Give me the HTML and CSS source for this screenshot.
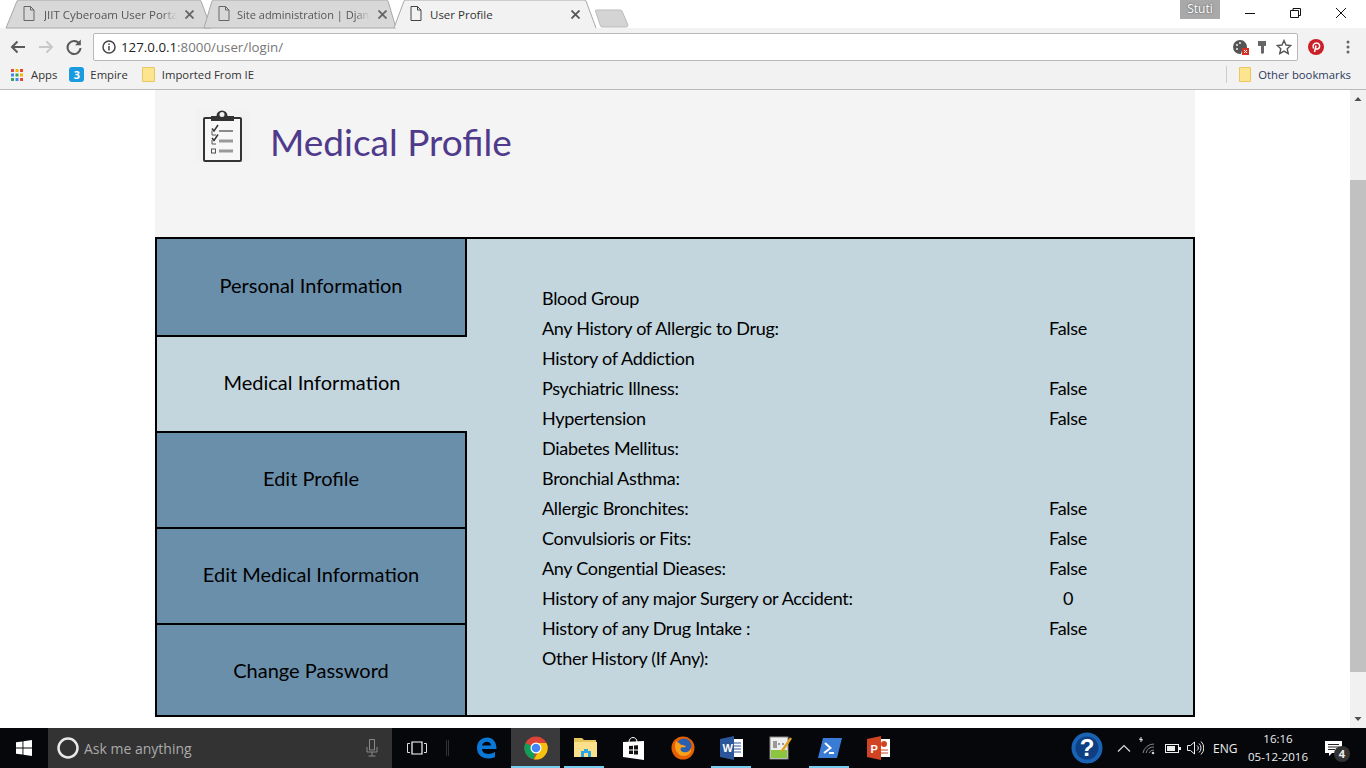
FILE: index.html
```html
<!DOCTYPE html>
<html>
<head>
<title>User Profile</title>
<link rel="stylesheet" href="styles.css">
</head>
<body>

<div class="tabstrip">
  <div class="tabs">
    <div class="tab tab-one">
      <svg class="tab-shape" width="206" height="28"><path d="M0 28 L11 1 Q11.500 0 13 0 H193 Q194.500 0 195 1 L205 28 Z" fill="#d8d8d8" stroke="#a8a8a8"/></svg>
      <svg class="page-icon" width="12" height="15" viewBox="0 0 12 15"><path d="M1 .5H7.500L11 4V14.500H1Z M7.500 .5V4H11" fill="none" stroke="#666"/></svg>
      <span class="tab-title">JIIT Cyberoam User Porta</span>
      <svg class="tab-x" width="9" height="9"><path d="M.5 .5L8.500 8.500M8.500 .5L.5 8.500" stroke="#666" stroke-width="1.800"/></svg>
    </div>
    <div class="tab tab-two">
      <svg class="tab-shape" width="192" height="28"><path d="M0 28 L8 1 Q8.500 0 10 0 H182 Q183.500 0 184 1 L192 28 Z" fill="#d8d8d8" stroke="#a8a8a8"/></svg>
      <svg class="page-icon" width="12" height="15" viewBox="0 0 12 15"><path d="M1 .5H7.500L11 4V14.500H1Z M7.500 .5V4H11" fill="none" stroke="#666"/></svg>
      <span class="tab-title">Site administration | Djan</span>
      <svg class="tab-x" width="9" height="9"><path d="M.5 .5L8.500 8.500M8.500 .5L.5 8.500" stroke="#666" stroke-width="1.800"/></svg>
    </div>
    <div class="tab tab-three">
      <svg class="tab-shape" width="202" height="29"><path d="M0 28 L10 1 Q10.500 0 12 0 H190 Q191.500 0 192 1 L202 28" fill="#f2f2f2" stroke="#a8a8a8"/></svg>
      <svg class="page-icon" width="12" height="15" viewBox="0 0 12 15"><path d="M1 .5H7.500L11 4V14.500H1Z M7.500 .5V4H11" fill="none" stroke="#444"/></svg>
      <span class="tab-title active-title">User Profile</span>
      <svg class="tab-x" width="9" height="9"><path d="M.5 .5L8.500 8.500M8.500 .5L.5 8.500" stroke="#555" stroke-width="1.800"/></svg>
    </div>
    <svg class="new-tab" width="34" height="19"><path d="M1 1 H25 Q26 1 27 2 L33 16 Q33 18 31 18 H7 Q6 18 5.500 17 L.5 2 Q.5 1 1 1Z" fill="#d4d4d4" stroke="#bbb"/></svg>
  </div>
  <div class="profile-badge">Stuti</div>
  <div class="win-controls">
    <svg width="46" height="28"><path d="M17 13.500H27" stroke="#111"/></svg>
    <svg width="46" height="28"><path d="M16.500 10.500H24.500V17.500H16.500Z M19 10V8.500H26.500V15.500H25" fill="none" stroke="#111"/></svg>
    <svg width="46" height="28"><path d="M16 8L26 18M26 8L16 18" stroke="#111" fill="none"/></svg>
  </div>
</div>

<div class="toolbar">
  <svg class="tool" width="18" height="18" viewBox="0 0 18 18"><path d="M16 9H3M8.500 3.500L3 9l5.500 5.500" fill="none" stroke="#5a5a5a" stroke-width="2"/></svg>
  <svg class="tool" width="18" height="18" viewBox="0 0 18 18"><path d="M2 9H15M9.500 3.500L15 9l-5.500 5.500" fill="none" stroke="#c8c8c8" stroke-width="2"/></svg>
  <svg class="tool" width="18" height="18" viewBox="0 0 18 18"><path d="M14.500 6A6.500 6.500 0 1 0 15.500 10" fill="none" stroke="#5a5a5a" stroke-width="2"/><path d="M15.800 1.500V7.300H10Z" fill="#5a5a5a"/></svg>
  <div class="omnibox">
    <svg width="14" height="14" viewBox="0 0 14 14"><circle cx="7" cy="7" r="6" fill="none" stroke="#444" stroke-width="1.500"/><path d="M7 6V10.500M7 3.500V5" stroke="#444" stroke-width="1.500"/></svg>
    <span class="url"><span class="url-host">127.0.0.1</span>:8000/user/login/</span>
    <div class="omni-icons">
      <svg width="18" height="18" viewBox="0 0 18 18"><path d="M8 2a7 7 0 1 0 0 14c2 0 1-2 2-3s4 0 5-3A7 7 0 0 0 8 2Z" fill="#555"/><circle cx="5" cy="7" r="1" fill="#f2f2f2"/><circle cx="8" cy="5" r="1" fill="#f2f2f2"/><circle cx="5" cy="11" r="1" fill="#f2f2f2"/><rect x="10" y="10" width="7" height="7" fill="#d93025"/><path d="M12 12l3 3m0-3l-3 3" stroke="#fff"/></svg>
      <svg width="12" height="16" viewBox="0 0 12 16"><path d="M2 2H10V7H8V14L6 15 5 14V7H2Z" fill="#666"/></svg>
      <svg class="star" width="16" height="16" viewBox="0 0 16 16"><path d="M8 1.500l2 4.500 4.800.5-3.600 3.200 1 4.800L8 12.100 3.800 14.500l1-4.800L1.200 6.500 6 6Z" fill="none" stroke="#555" stroke-width="1.400"/></svg>
    </div>
  </div>
  <svg class="pin" width="16" height="16" viewBox="0 0 16 16"><circle cx="8" cy="8" r="8" fill="#cb2027"/><path d="M5.500 9.500C4 6.500 6 4 8.500 4c2.500 0 3.500 2 3 4-.4 1.800-2.500 2.800-3.500 1.500M8 6.500L6.500 13" fill="none" stroke="#fff" stroke-width="1.500"/></svg>
  <svg class="dots" width="4" height="14" viewBox="0 0 4 14"><circle cx="2" cy="2" r="1.500" fill="#666"/><circle cx="2" cy="7" r="1.500" fill="#666"/><circle cx="2" cy="12" r="1.500" fill="#666"/></svg>
</div>

<div class="bookmarks">
  <div class="mark apps">
    <svg width="12" height="12" viewBox="0 0 12 12">
      <rect width="3" height="3" fill="#e8453c"/><rect x="4.500" width="3" height="3" fill="#f4b400"/><rect x="9" width="3" height="3" fill="#e8453c"/>
      <rect y="4.500" width="3" height="3" fill="#4285f4"/><rect x="4.500" y="4.500" width="3" height="3" fill="#34a853"/><rect x="9" y="4.500" width="3" height="3" fill="#f4b400"/>
      <rect y="9" width="3" height="3" fill="#34a853"/><rect x="4.500" y="9" width="3" height="3" fill="#4285f4"/><rect x="9" y="9" width="3" height="3" fill="#e8453c"/>
    </svg>
    <span>Apps</span>
  </div>
  <div class="mark empire">
    <span class="empire-badge">3</span>
    <span>Empire</span>
  </div>
  <div class="mark imported">
    <svg width="13" height="15" viewBox="0 0 13 15"><path d="M.5.500H12.500V14.500H.5Z" fill="#fde58f" stroke="#e9c95f"/></svg>
    <span>Imported From IE</span>
  </div>
  <div class="mark other">
    <svg width="12" height="15" viewBox="0 0 12 15"><path d="M.5.500H11.500V14.500H.5Z" fill="#fde58f" stroke="#e9c95f"/></svg>
    <span>Other bookmarks</span>
  </div>
</div>

<div class="viewport">
  <div class="page">
    <div class="page-head">
      <svg class="clipboard" width="53" height="53" viewBox="0 0 53 53">
        <rect width="53" height="53" fill="#f2f2f2"/>
        <rect x="8" y="9" width="37" height="43" rx="1" fill="#f7f7f7" stroke="#333" stroke-width="2"/>
        <path d="M15 12V7H20.500A5 5 0 0 1 31.500 7H38V12Z" fill="#333"/>
        <circle cx="26" cy="5.500" r="2.500" fill="#f2f2f2"/>
        <path d="M16 19.500l2 2.500 4-6M16 29l2 2.500 4-6" fill="none" stroke="#333" stroke-width="1.500"/>
        <path d="M16 21.500V26H20M16 31V35H20" fill="none" stroke="#555"/>
        <rect x="15.500" y="40" width="4" height="4" fill="none" stroke="#555"/>
        <path d="M23 22H37" stroke="#666" stroke-width="1.500"/>
        <path d="M23 32H37M23 42H37" stroke="#999" stroke-width="3"/>
      </svg>
      <h1 class="page-title">Medical Profile</h1>
    </div>
    <div class="profile-box">
      <div class="side-nav">
        <div class="side-item">Personal Information</div>
        <div class="side-item current">Medical Information</div>
        <div class="side-item">Edit Profile</div>
        <div class="side-item">Edit Medical Information</div>
        <div class="side-item last">Change Password</div>
      </div>
      <div class="details">
        <div class="row"><span>Blood Group</span><span class="val"></span></div>
        <div class="row"><span>Any History of Allergic to Drug:</span><span class="val">False</span></div>
        <div class="row"><span>History of Addiction</span><span class="val"></span></div>
        <div class="row"><span>Psychiatric Illness:</span><span class="val">False</span></div>
        <div class="row"><span>Hypertension</span><span class="val">False</span></div>
        <div class="row"><span>Diabetes Mellitus:</span><span class="val"></span></div>
        <div class="row"><span>Bronchial Asthma:</span><span class="val"></span></div>
        <div class="row"><span>Allergic Bronchites:</span><span class="val">False</span></div>
        <div class="row"><span>Convulsioris or Fits:</span><span class="val">False</span></div>
        <div class="row"><span>Any Congential Dieases:</span><span class="val">False</span></div>
        <div class="row"><span>History of any major Surgery or Accident:</span><span class="val">0</span></div>
        <div class="row"><span>History of any Drug Intake :</span><span class="val">False</span></div>
        <div class="row"><span>Other History (If Any):</span><span class="val"></span></div>
      </div>
    </div>
  </div>
  <div class="scrollbar">
    <svg width="16" height="17"><path d="M4.500 11L8 7l3.500 4Z" fill="#505050"/></svg>
    <div class="scroll-track"><div class="scroll-thumb"></div></div>
    <svg width="16" height="17"><path d="M4.500 6L8 10l3.500-4Z" fill="#505050"/></svg>
  </div>
</div>

<div class="taskbar">
  <div class="start">
    <svg width="16" height="16" viewBox="0 0 16 16"><path d="M0 2.300L6.500 1.400V7.600H0ZM7.400 1.200L16 0V7.600H7.400ZM0 8.400H6.500V14.600L0 13.700ZM7.400 8.400H16V16L7.400 14.800Z" fill="#fff"/></svg>
  </div>
  <div class="search">
    <svg width="22" height="22"><circle cx="11" cy="11" r="9.500" fill="none" stroke="#e8e8e8" stroke-width="2.500"/></svg>
    <span class="search-text">Ask me anything</span>
    <svg class="mic" width="12" height="18" viewBox="0 0 12 18"><path d="M3.500.5H8.500V11H3.500ZM1 8V13H11V8M6 13V17M2.500 17H9.500" fill="none" stroke="#8a8a8a"/></svg>
  </div>
  <svg class="task-view" width="20" height="14" viewBox="0 0 20 14"><path d="M5 1H15V13H5Z" fill="none" stroke="#fff" stroke-width="1.200"/><path d="M3 2.500H.5V11.500H3M17 2.500H19.500V11.500H17" fill="none" stroke="#ddd"/></svg>
  <div class="task-sep"></div>
  <div class="apps-row">
    <div class="app edge">
      <svg width="24" height="24" viewBox="0 0 24 24"><path d="M3 12C3 5 8 1.500 13 1.500c6 0 9.500 4.500 9.500 11.500H8c0 5 7 6.500 13 3v5c-8 3.500-18 1-18-9.500ZM8 9.500h9c0-5-8-5-9 0Z" fill="#0a78d7"/></svg>
    </div>
    <div class="app active">
      <svg width="24" height="24" viewBox="0 0 24 24"><circle cx="12" cy="12" r="11.500" fill="#db4437"/><path d="M12 12L1.500 7A11.500 11.500 0 0 0 10 23.300Z" fill="#0f9d58"/><path d="M12 7H22.500A11.500 11.500 0 0 1 10 23.300L16 13Z" fill="#f4c20d"/><circle cx="12" cy="12" r="5.500" fill="#fff"/><circle cx="12" cy="12" r="4.300" fill="#4285f4"/></svg>
    </div>
    <div class="app open">
      <svg width="24" height="20" viewBox="0 0 24 20"><path d="M1 0H9L11 2H23V5H1Z" fill="#e8c55a"/><rect x="1" y="4" width="23" height="15" fill="#fbdf8b"/><path d="M8 19V13H11V11H15V13H18V19Z" fill="#2aa7e0"/><rect x="11" y="15" width="4" height="4" fill="#fbdf8b"/></svg>
    </div>
    <div class="app">
      <svg width="21" height="24" viewBox="0 0 21 24"><path d="M6 6C6 0 14 0 14 6" fill="none" stroke="#fff"/><path d="M0 6L21 5V24L0 21Z" fill="#fff"/><path d="M6 10L10 9.700V13.500H6ZM11 9.600L15 9.300V13.500H11ZM6 14.500H10V18H6ZM11 14.500H15V18.500H11Z" fill="#111"/></svg>
    </div>
    <div class="app">
      <svg width="24" height="24" viewBox="0 0 24 24"><circle cx="12" cy="12" r="11.500" fill="#e66000"/><circle cx="13" cy="10" r="7.500" fill="#2a5fb0"/><path d="M5 5C2 12 6 20 13 20c5 0 8-4 7-8-1 4-5 5-8 4-3-1-3-4-1-5 2 1 4 0 4-1-2 0-3-2-5-1C9 7 7 7 5 5Z" fill="#f7a11c"/></svg>
    </div>
    <div class="app open">
      <svg width="23" height="24" viewBox="0 0 23 24"><rect x="9" y="3" width="14" height="18" fill="#fff"/><path d="M11 7H21M11 10H21M11 13H21M11 16H21" stroke="#2b579a"/><path d="M0 3L14 0V24L0 21Z" fill="#2b579a"/><text x="2.500" y="16" class="app-letter">W</text></svg>
    </div>
    <div class="app">
      <svg width="23" height="24" viewBox="0 0 23 24"><rect x="1" y="1" width="18" height="22" fill="#eee" stroke="#888"/><rect x="2" y="14" width="16" height="8" fill="#8cc63f"/><path d="M5 5V12M7 5V12M9 8H11M13 8H15" stroke="#444"/><path d="M22 2L13 15" stroke="#e0a020" stroke-width="2.500"/></svg>
    </div>
    <div class="app open">
      <svg width="24" height="20" viewBox="0 0 24 20"><path d="M5 0H24L19 20H0Z" fill="#3a7bd5"/><path d="M7 5L12.500 10 6 15M11 15H16" fill="none" stroke="#fff" stroke-width="2"/></svg>
    </div>
    <div class="app">
      <svg width="23" height="24" viewBox="0 0 23 24"><rect x="9" y="3" width="14" height="18" fill="#fff"/><circle cx="17" cy="8" r="3" fill="#d04423"/><path d="M12 14H21M12 17H21" stroke="#d04423"/><path d="M0 3L14 0V24L0 21Z" fill="#d04423"/><text x="3.500" y="16.500" class="app-letter">P</text></svg>
    </div>
  </div>
  <div class="tray">
    <svg class="help" width="32" height="32" viewBox="0 0 32 32"><circle cx="16" cy="16" r="15.500" fill="#1a62b4"/><circle cx="16" cy="16" r="11.500" fill="#0e3f82"/><text x="16" y="24" class="help-mark">?</text></svg>
    <svg class="chev" width="14" height="8"><path d="M1 7.500L7 1.500l6 6" fill="none" stroke="#ddd" stroke-width="1.200"/></svg>
    <svg class="wifi" width="16" height="18" viewBox="0 0 16 18"><path d="M0 2L4 3M2 0L2 5" stroke="#eee"/><path d="M4 16A11 11 0 0 1 15 7M7 16A8 8 0 0 1 15 10M10 16A5 5 0 0 1 15 13" fill="none" stroke="#888"/><circle cx="14" cy="16" r="1.300" fill="#ccc"/></svg>
    <svg class="batt" width="16" height="9" viewBox="0 0 16 9"><rect x=".5" y=".5" width="13" height="8" fill="none" stroke="#eee"/><rect x="2" y="2" width="8" height="5" fill="#eee"/><rect x="14" y="3" width="2" height="3" fill="#eee"/></svg>
    <svg class="sound" width="17" height="14" viewBox="0 0 17 14"><path d="M.5 4.500H3.500L7.500 1V13L3.500 9.500H.5Z" fill="none" stroke="#eee"/><path d="M10 4.500A3 3 0 0 1 10 9.500M12 2.500A6 6 0 0 1 12 11.500M14 .5A9 9 0 0 1 14 13.500" fill="none" stroke="#eee"/></svg>
    <span class="lang">ENG</span>
    <div class="clock"><span>16:16</span><span>05-12-2016</span></div>
    <div class="notif">
      <svg width="18" height="15" viewBox="0 0 18 15"><path d="M0 0H17V12H7L4 15V12H0Z" fill="#fff"/><path d="M3 3.500H14M3 6H14M3 8.500H10" stroke="#222"/></svg>
      <span class="notif-count">4</span>
    </div>
  </div>
</div>

</body>
</html>
```
FILE: styles.css
```css
* { box-sizing: border-box; }
html, body { margin: 0; height: 100%; }
body { display: flex; flex-direction: column; height: 768px; overflow: hidden;
       font-family: "Open Sans", "Liberation Sans", sans-serif; background: #fff; }

/* browser tabs */
.tabstrip { height: 28px; flex: none; display: flex; background: #fff; position: relative; z-index: 1; }
.tabs { display: flex; padding-left: 6px; }
.tab { position: relative; height: 28px; display: flex; align-items: center; font-size: 11.500px; color: #444; }
.tab-one { width: 206px; padding-left: 17px; margin-right: -8px; }
.tab-two { width: 192px; padding-left: 14px; margin-right: -2px; font-size: 11px; }
.tab-three { width: 202px; padding-left: 16px; }
.tab-shape { position: absolute; left: 0; top: 0; overflow: visible; }
.page-icon { position: relative; flex: none; margin-right: 9px; margin-top: -1px; }
.tab-two .page-icon { margin-right: 7px; }
.tab-three .page-icon { margin-right: 8px; }
.tab-title { position: relative; width: 133px; white-space: nowrap; overflow: hidden; color: #555;
             -webkit-mask-image: linear-gradient(to right, #000 88%, transparent); }
.active-title { color: #333; -webkit-mask-image: none; }
.tab-x { position: relative; flex: none; margin-left: 8px; }
.new-tab { margin-top: 9px; margin-left: -1px; }
.profile-badge { margin-left: 551px; width: 40px; height: 19px; background: #a9a9a9; color: #fff;
                 font-size: 12px; line-height: 17px; text-align: center; text-shadow: 0 0 2px #444; }
.win-controls { margin-left: auto; display: flex; }
.win-controls svg { display: block; }

/* toolbar */
.toolbar { height: 34px; background: #f2f2f2; display: flex; align-items: center; padding: 4px 14px 0 9px; flex: none; }
.tool { margin-right: 10px; flex: none; }
.omnibox { width: 1205px; height: 28px; background: #fff; border: 1px solid #b8b8b8; border-radius: 2px;
           display: flex; align-items: center; padding: 0 5px 0 8px; }
.url { margin-left: 5px; font-size: 13.300px; color: #777; }
.url-host { color: #222; }
.omni-icons { margin-left: auto; display: flex; align-items: center; gap: 6px; }
.star { margin-left: 2px; }
.pin { margin-left: 10px; }
.dots { margin-left: 22px; }

/* bookmarks */
.bookmarks { height: 28px; flex: none; background: #f2f2f2; border-bottom: 1px solid #bbb; display: flex; align-items: center;
             padding: 0 15px 2px 11px; font-size: 11.300px; color: #333; }
.mark { display: flex; align-items: center; }
.apps { gap: 8px; }
.empire { margin-left: 12px; gap: 6px; }
.empire-badge { width: 15px; height: 15px; border-radius: 3px; background: #1a9be0; color: #fff; font-size: 11px; font-weight: 700;
                text-align: center; line-height: 15px; }
.imported { margin-left: 14px; gap: 7px; }
.other { margin-left: auto; gap: 7px; padding-left: 12px; border-left: 1px solid #ccc; height: 17px; color: #2d3a5e; }

/* page */
.viewport { height: 638px; flex: none; display: flex; background: #fff; overflow: hidden; }
.page { width: 1040px; margin-left: 155px; margin-right: 155px; flex: none; }
.page-head { height: 147px; background: #f4f4f4; display: flex; align-items: flex-start; padding: 19px 0 0 41px; }
.clipboard { flex: none; }
.page-title { margin: 8px 0 0 21px; font-family: Lato, "Open Sans", sans-serif; font-weight: 400; font-size: 37px; line-height: 50px; color: #4f3a8c; }

.profile-box { height: 480px; border: 2px solid #000; background: #c3d6de; display: flex;
               font-family: Lato, "Open Sans", sans-serif; color: #000; font-size: 18px; }
.side-nav { width: 310px; flex: none; display: grid; grid-template-rows: 98px 96px 96px 96px 90px; }
.side-item { background: #6a8fab; border-right: 2px solid #000; border-bottom: 2px solid #000;
             display: flex; align-items: center; justify-content: center; padding-bottom: 5px; font-size: 20px; }
.side-item.current { background: #c3d6de; border-right: 0; }
.side-item.last { border-bottom: 0; padding-bottom: 0; }
.details { padding: 44px 0 0 75px; }
.row { display: grid; grid-template-columns: 467px 118px; height: 30px; line-height: 30px; letter-spacing: -.3px; }
.val { text-align: center; }

.scrollbar { width: 16px; margin-left: auto; flex: none; background: #f1f1f1; display: flex; flex-direction: column; }
.scrollbar svg { flex: none; display: block; }
.scroll-track { flex: 1; padding-top: 73px; }
.scroll-thumb { height: 492px; background: #c1c1c1; }

/* taskbar */
.taskbar { height: 40px; flex: none; background: #05070b; display: flex; align-items: center; color: #eee; }
.start { width: 48px; display: flex; justify-content: center; }
.search { width: 344px; height: 40px; background: #333; display: flex; align-items: center; padding: 0 14px 0 9px; }
.search-text { margin-left: 5px; font-size: 14px; color: #aaa; }
.mic { margin-left: auto; }
.task-view { margin-left: 15px; }
.task-sep { width: 3px; height: 16px; margin-left: 19px; border-left: 1px solid #333; border-right: 1px solid #333; }
.apps-row { display: flex; margin-left: 13px; height: 40px; }
.app { width: 49px; height: 40px; display: flex; align-items: center; justify-content: center; position: relative; }
.app.edge { padding-right: 2px; }
.app.active { background: #3a3a3d; box-shadow: inset 0 -2px 0 #76cdf0; }
.app.open::after { content: ""; position: absolute; left: 4px; right: 5px; bottom: 0; height: 2px; background: #76cdf0; }
.app-letter { font: 700 11px "Liberation Sans", sans-serif; fill: #fff; }
.help-mark { font: 700 24px "Liberation Sans", sans-serif; fill: #fff; text-anchor: middle; }
.tray { margin-left: auto; display: flex; align-items: center; height: 40px; padding-right: 19px; }
.chev { margin-left: 14px; }
.wifi { margin-left: 8px; margin-top: -4px; }
.batt { margin-left: 10px; }
.sound { margin-left: 6px; }
.lang { margin-left: 9px; width: 23px; font-size: 12px; white-space: nowrap; }
.clock { width: 84px; display: flex; flex-direction: column; align-items: center; font-size: 11.500px; line-height: 18px; }
.notif { width: 27px; position: relative; display: flex; justify-content: center; }
.notif-count { position: absolute; left: 14px; top: 5px; width: 16px; height: 16px; border-radius: 50%; background: #333;
               font-size: 11px; font-weight: 700; text-align: center; line-height: 16px; }
```
